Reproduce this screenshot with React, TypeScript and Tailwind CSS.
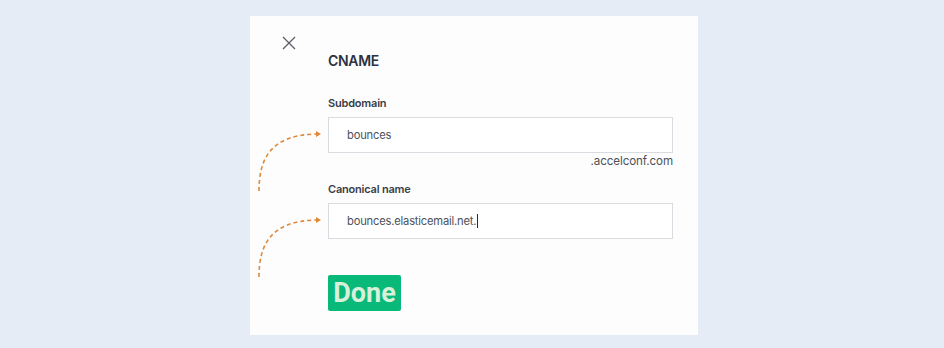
import React from "react";

function Arrow({ top }: { top: number }) {
  return (
    <svg
      className="absolute"
      style={{ left: 250, top }}
      width="80"
      height="70"
      viewBox="0 0 80 70"
      fill="none"
    >
      <path
        d="M9 64 C9 30 22 8 66 7"
        stroke="#e0893a"
        strokeWidth="1.6"
        strokeDasharray="4 3"
        fill="none"
      />
      <path d="M66 4 L71 7 L66 10 Z" fill="#e0893a" />
    </svg>
  );
}

export default function App() {
  return (
    <div
      className="relative w-[944px] h-[348px] bg-[#e5ecf5] pt-[16px] pl-[250px]"
      style={{ fontFamily: "Inter, 'Noto Sans', sans-serif" }}
    >
      <div className="relative w-[448px] h-[319px] bg-[#fdfdfd] pl-[78px] pr-[25px] pt-[35px]">
        <svg
          className="absolute left-[32px] top-[20px]"
          width="14"
          height="14"
          viewBox="0 0 14 14"
        >
          <path d="M1 1 L13 13 M13 1 L1 13" stroke="#5a5d63" strokeWidth="1.3" />
        </svg>
        <div className="text-[14px] leading-[20px] font-semibold tracking-[-0.3px] text-[#2e3240]">CNAME</div>
        <div className="mt-[24px] text-[11px] leading-[16px] font-semibold tracking-[-0.2px] text-[#3a3e48]">
          Subdomain
        </div>
        <div className="mt-[6px] h-[36px] border border-[#d8dbdf] bg-white flex items-center pl-[18px] text-[11.2px] tracking-[-0.2px] text-[#4d515a]">
          bounces
        </div>
        <div className="text-right text-[11.6px] leading-[16px] tracking-[-0.1px] text-[#4d515a]">.accelconf.com</div>
        <div className="mt-[12px] text-[11px] leading-[16px] font-semibold tracking-[-0.2px] text-[#3a3e48]">
          Canonical name
        </div>
        <div className="mt-[6px] h-[36px] border border-[#d8dbdf] bg-white flex items-center pl-[18px] text-[11.2px] tracking-[-0.2px] text-[#4d515a]">
          bounces.elasticemail.net.
          <span className="inline-block w-px h-[14px] bg-[#2a2a2a] ml-[1px]" />
        </div>
        <button
          className="mt-[36px] h-[36px] w-[73px] rounded-[2px] bg-[#08b97a] text-[#d8f0da] text-[27px] font-bold leading-none flex items-center justify-center"
          style={{ fontFamily: "Roboto, 'Liberation Sans', sans-serif" }}
        >
          Done
        </button>
      </div>
      <Arrow top={127} />
      <Arrow top={213} />
    </div>
  );
}
